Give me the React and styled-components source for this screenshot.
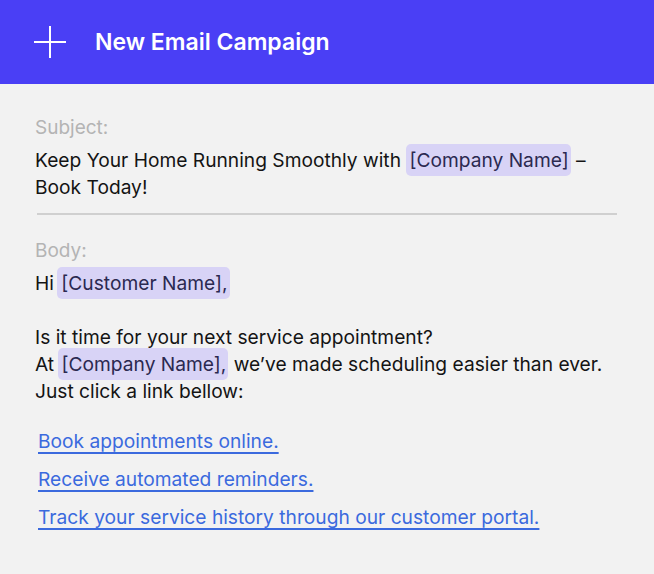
import React from 'react'
import styled, { createGlobalStyle } from 'styled-components'

const GlobalStyle = createGlobalStyle`
  html, body {
    margin: 0;
    padding: 0;
    background: #f2f2f2;
    font-family: Inter, "Noto Sans", sans-serif;
  }
`

export default function App() {
  return (
    <Page>
      <GlobalStyle />
      <Header>
        <PlusIcon viewBox="0 0 34 34">
          <path d="M17 1 V33 M1 17 H33" stroke="#fff" strokeWidth="2" fill="none" />
        </PlusIcon>
        <Title>New Email Campaign</Title>
      </Header>

      <Content>
        <Label>Subject:</Label>
        <Text>
          Keep Your Home Running Smoothly with <Tag>[Company Name]</Tag> –<br />
          Book Today!
        </Text>
        <Divider />

        <Label>Body:</Label>
        <Text>
          Hi <Tag $tight>[Customer Name],</Tag>
          <br />
          <br />
          Is it time for your next service appointment?<br />
          At <Tag $tight>[Company Name],</Tag> we’ve made scheduling easier than ever.<br />
          Just click a link bellow:
        </Text>

        <Links>
          <LinkItem href="#">Book appointments online.</LinkItem>
          <LinkItem href="#">Receive automated reminders.</LinkItem>
          <LinkItem href="#">Track your service history through our customer portal.</LinkItem>
        </Links>
      </Content>
    </Page>
  )
}

const Page = styled.div`
  width: 654px;
  min-height: 574px;
  background: #f2f2f2;
`

const Header = styled.div`
  height: 84px;
  background: #4a3ff5;
  display: flex;
  align-items: center;
  padding-left: 33px;
  gap: 28px;
  box-sizing: border-box;
`

const PlusIcon = styled.svg`
  width: 34px;
  height: 34px;
  flex-shrink: 0;
`

const Title = styled.div`
  color: #fff;
  font-size: 23px;
  font-weight: 600;
`

const Content = styled.div`
  padding: 32px 37px 0 35px;
  display: flex;
  flex-direction: column;
`

const Label = styled.div`
  font-size: 19px;
  line-height: 24px;
  color: #b4b4b4;
`

const Text = styled.div`
  margin-top: 7px;
  font-size: 19.2px;
  line-height: 27px;
  color: #141414;
`

const Tag = styled.span`
  background: #d8d3f6;
  color: #2b2950;
  border-radius: 5px;
  padding: 4px 2px 4px ${p => (p.$tight ? '4px' : '3px')};
  margin-left: ${p => (p.$tight ? '-2px' : '0')};
`

const Divider = styled.div`
  margin: 12px 0 24px 2px;
  height: 2px;
  background: #d0d0d0;
`

const Links = styled.div`
  margin-top: 23px;
  display: flex;
  flex-direction: column;
  align-items: flex-start;
  gap: 11px;
  padding-left: 3px;
`

const LinkItem = styled.a`
  font-size: 19.2px;
  line-height: 27px;
  color: #3b6ade;
  text-decoration: underline;
  text-decoration-thickness: 1.5px;
  text-underline-offset: 4px;
`
